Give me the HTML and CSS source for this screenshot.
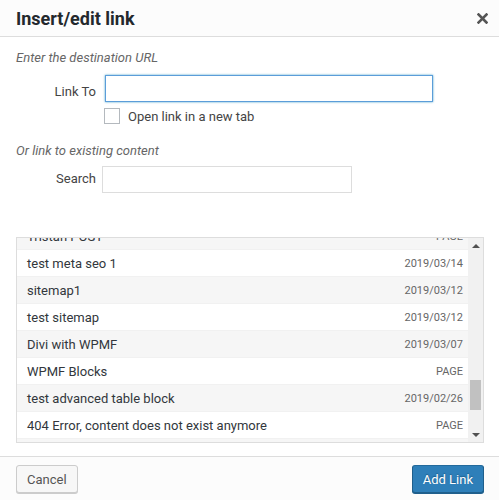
FILE: index.html
```html
<!DOCTYPE html>
<html lang="en">

<head>
    <meta charset="UTF-8">
    <meta name="viewport" content="width=device-width, initial-scale=1.0">
    <title>Insert/edit link</title>
    <link rel="stylesheet" href="styles.css">
</head>

<body>

    <div class="dialog">
        <div class="dialog-header">
            <h1>Insert/edit link</h1>
            <button class="close-btn" aria-label="Close">
                <svg width="11" height="11" viewBox="0 0 11 11">
                    <path d="M1.5 1.5 L9.5 9.5 M9.5 1.5 L1.5 9.5" stroke="#555" stroke-width="2.6" stroke-linecap="square" fill="none" />
                </svg>
            </button>
        </div>

        <div class="dialog-body">
            <p class="hint">Enter the destination URL</p>

            <div class="field-row">
                <label class="field-label link-label" for="urlField">Link To</label>
                <input type="text" id="urlField" class="url-input">
            </div>

            <div class="check-row">
                <span class="checkbox"></span>
                <span>Open link in a new tab</span>
            </div>

            <p class="hint hint-second">Or link to existing content</p>

            <div class="field-row search-row">
                <label class="field-label search-label" for="searchField">Search</label>
                <input type="text" id="searchField" class="search-input">
            </div>

            <!-- Results list -->
            <div class="results">
                <div class="results-viewport">
                    <ul class="results-list">
                        <li class="alt"><span class="item-title">Tristan POST</span><span class="item-info">Page</span></li>
                        <li><span class="item-title">test meta seo 1</span><span class="item-info">2019/03/14</span></li>
                        <li class="alt"><span class="item-title">sitemap1</span><span class="item-info">2019/03/12</span></li>
                        <li><span class="item-title">test sitemap</span><span class="item-info">2019/03/12</span></li>
                        <li class="alt"><span class="item-title">Divi with WPMF</span><span class="item-info">2019/03/07</span></li>
                        <li><span class="item-title">WPMF Blocks</span><span class="item-info">Page</span></li>
                        <li class="alt"><span class="item-title">test advanced table block</span><span class="item-info">2019/02/26</span></li>
                        <li><span class="item-title">404 Error, content does not exist anymore</span><span class="item-info">Page</span></li>
                        <li class="alt"><span class="item-title">Hello world!</span><span class="item-info">2019/02/20</span></li>
                    </ul>
                </div>
                <div class="scrollbar">
                    <span class="arrow arrow-up"></span>
                    <div class="track">
                        <span class="thumb"></span>
                    </div>
                    <span class="arrow arrow-down"></span>
                </div>
            </div>
        </div>

        <div class="dialog-footer">
            <button class="btn">Cancel</button>
            <button class="btn btn-primary">Add Link</button>
        </div>
    </div>

</body>

</html>
```

FILE: styles.css
```css
body {
    margin: 0;
    font-family: Roboto, "Liberation Sans", sans-serif;
    font-size: 13px;
    color: #32373c;
    background: #fff;
}

.dialog {
    width: 499px;
    height: 500px;
    display: flex;
    flex-direction: column;
}

.dialog-header {
    height: 36px;
    background: #fcfcfc;
    border-bottom: 1px solid #ddd;
    display: flex;
    align-items: center;
    justify-content: space-between;
    padding: 0 11px 0 16px;
}

.dialog-header h1 {
    margin: 0;
    font-size: 18px;
    font-weight: 700;
    color: #23282d;
}

.close-btn {
    border: none;
    background: none;
    padding: 0;
    width: 11px;
    height: 11px;
    display: flex;
}

.dialog-body {
    flex: 1;
    padding: 0 15px 0 16px;
}

.hint {
    margin: 12px 0 0;
    line-height: 18px;
    font-style: italic;
    color: #666;
}

.hint-second {
    margin-top: 18px;
}

.field-row {
    display: flex;
    align-items: center;
    margin-top: 8px;
}

.search-row {
    margin-top: 6px;
}

.field-label {
    width: 80px;
    text-align: right;
    color: #444;
}

.link-label {
    margin-top: 5px;
}

.search-label {
    margin-bottom: 3px;
}

.url-input,
.search-input {
    box-sizing: border-box;
    height: 27px;
    border: 1px solid #ddd;
    font-family: inherit;
    font-size: 13px;
    padding: 0 6px;
    background: #fff;
}

.url-input {
    width: 328px;
    margin-left: 9px;
    border-color: #5b9dd9;
    box-shadow: 0 0 2px rgba(30, 140, 190, 0.8);
    outline: none;
}

.search-input {
    width: 250px;
    margin-left: 6px;
}

.check-row {
    display: flex;
    align-items: center;
    gap: 8px;
    margin: 6px 0 0 88px;
    height: 16px;
    color: #444;
}

.checkbox {
    box-sizing: border-box;
    width: 16px;
    height: 16px;
    border: 1px solid #b4b9be;
    background: #fff;
}

/* Results */
.results {
    margin-top: 44px;
    height: 204px;
    border: 1px solid #ddd;
    display: flex;
}

.results-viewport {
    flex: 1;
    overflow: hidden;
}

.results-list {
    list-style: none;
    margin: -15px 0 0;
    padding: 0;
}

.results-list li {
    box-sizing: border-box;
    height: 27px;
    border-bottom: 1px solid #f1f1f1;
    padding: 0 5px 0 10px;
    display: flex;
    align-items: center;
    justify-content: space-between;
    background: #fff;
}

.results-list li.alt {
    background: #f6f6f6;
}

.item-title {
    color: #32373c;
}

.item-info {
    font-size: 11px;
    color: #666;
    text-transform: uppercase;
}

.scrollbar {
    width: 15px;
    background: #f1f1f1;
    display: flex;
    flex-direction: column;
}

.arrow {
    height: 15px;
    display: flex;
    align-items: center;
    justify-content: center;
}

.arrow-up::before {
    content: "";
    border-left: 4px solid transparent;
    border-right: 4px solid transparent;
    border-bottom: 4px solid #505050;
}

.arrow-down::before {
    content: "";
    border-left: 4px solid transparent;
    border-right: 4px solid transparent;
    border-top: 4px solid #505050;
}

.track {
    flex: 1;
    padding: 127px 2px 0;
}

.thumb {
    display: block;
    height: 30px;
    background: #c1c1c1;
}

/* Footer */
.dialog-footer {
    height: 44px;
    margin-top: 12px;
    border-top: 1px solid #ddd;
    background: #fcfcfc;
    display: flex;
    justify-content: space-between;
    align-items: flex-start;
    padding: 8px 15px 0 16px;
    box-sizing: border-box;
}

.btn {
    height: 28px;
    padding: 0 10px;
    font-family: inherit;
    font-size: 13px;
    color: #555;
    background: #f7f7f7;
    border: 1px solid #ccc;
    border-radius: 3px;
    box-shadow: 0 1px 0 #ccc;
}

.btn-primary {
    background: #2e7fb9;
    border-color: #236a9c #1f5f8c #1f5f8c;
    box-shadow: 0 1px 0 #1f5f8c;
    color: #fff;
    text-shadow: 0 -1px 1px #1f5f8c;
}
```
